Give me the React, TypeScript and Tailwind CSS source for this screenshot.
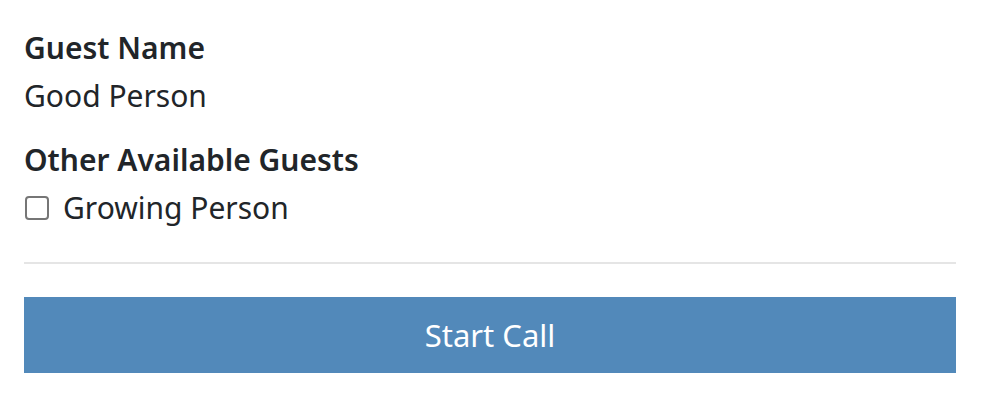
import React from "react";

const App: React.FC = () => {
  return (
    <div
      className="w-[982px] h-[402px] bg-white pl-6 pr-[26px] pt-6 text-[#212529]"
      style={{ fontFamily: '"Noto Sans", "Open Sans", sans-serif' }}
    >
      <div className="text-[30px] leading-[48px] font-semibold">Guest Name</div>
      <div className="text-[30px] leading-[48px]">Good Person</div>

      <div className="mt-4 text-[30px] leading-[48px] font-semibold">Other Available Guests</div>
      <label className="flex items-center gap-[14px] text-[30px] leading-[48px]">
        <span className="ml-px w-6 h-6 rounded-[4px] border-2 border-[#767676] bg-white" />
        <span>Growing Person</span>
      </label>

      <hr className="mt-[30px] border-0 h-[2px] bg-[#e5e5e5]" />

      <button className="mt-[33px] w-full h-[76px] bg-[#5289ba] text-white text-[31px]">
        Start Call
      </button>
    </div>
  );
};

export default App;
